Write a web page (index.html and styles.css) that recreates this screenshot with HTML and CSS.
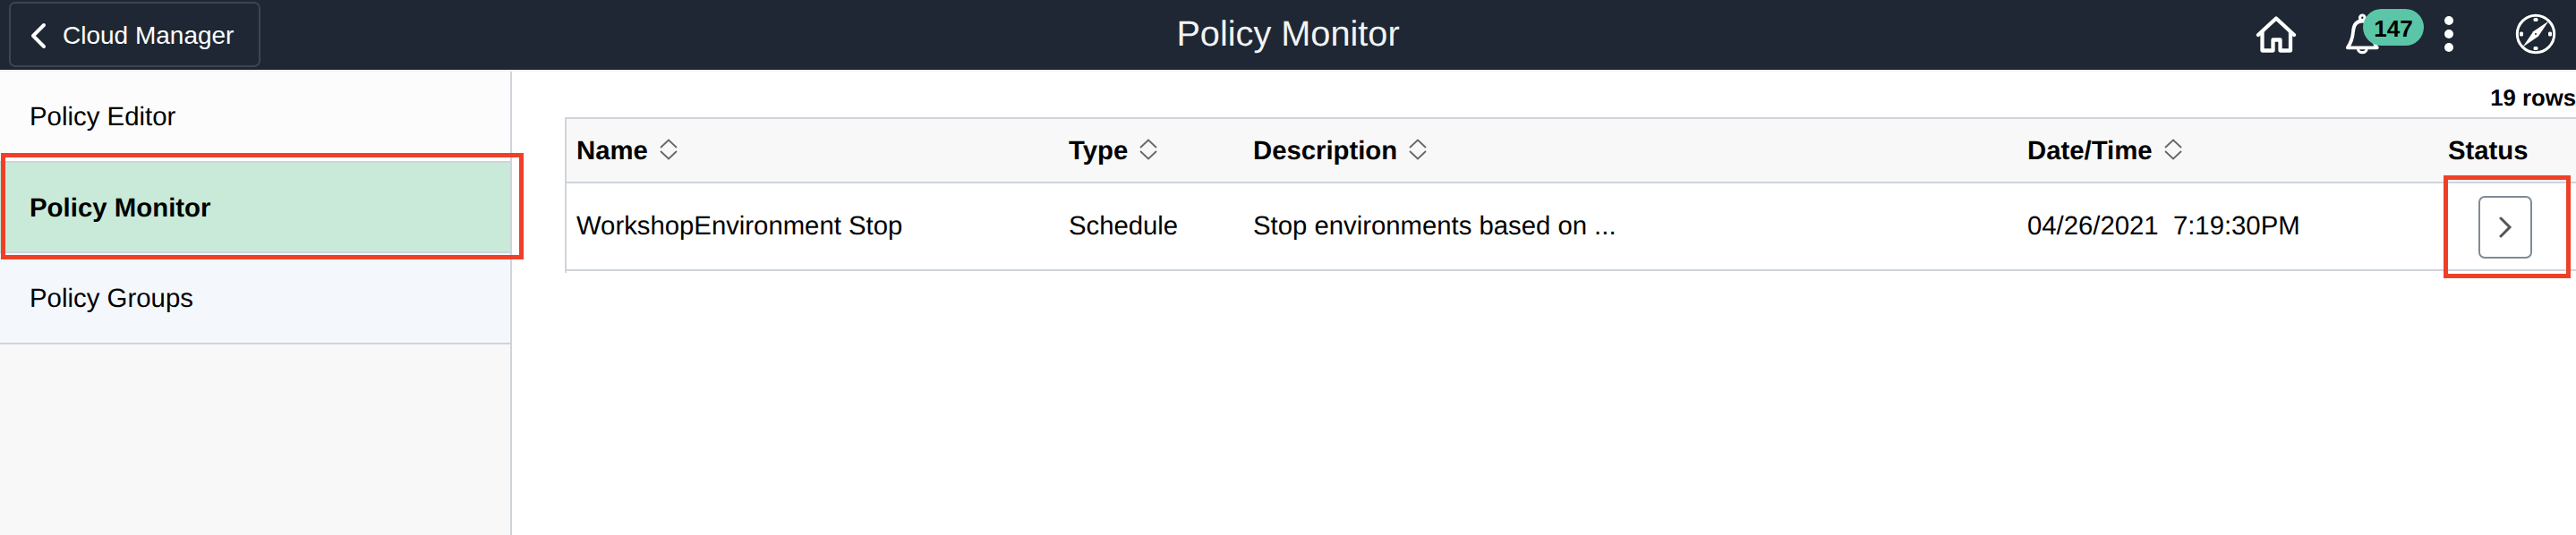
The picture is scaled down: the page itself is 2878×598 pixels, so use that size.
FILE: index.html
```html
<!DOCTYPE html>
<html lang="en">
<head>
<meta charset="utf-8">
<title>Policy Monitor</title>
<link rel="stylesheet" href="styles.css">
</head>
<body>
<div class="app">
  <header class="topbar">
    <div class="side-left">
      <button class="back" type="button">
        <svg width="18" height="30" viewBox="0 0 18 30"><path d="M15 3 3 15 15 27" fill="none" stroke="#fff" stroke-width="4" stroke-linecap="round" stroke-linejoin="round"/></svg>
        <span>Cloud Manager</span>
      </button>
    </div>
    <h1 class="title">Policy Monitor</h1>
    <nav class="actions">
      <svg class="home" width="46" height="44" viewBox="0 0 46 44" fill="none" stroke="#fff" stroke-width="4.300"><path d="M3 23 23 4.500 43 23" stroke-linecap="round" stroke-linejoin="round"/><path d="M7.500 19V40.500H19.500V28.500H27.500V40.500H39V19" stroke-linejoin="round"/></svg>
      <div class="bell">
        <svg width="40" height="46" viewBox="0 0 40 46" fill="none" stroke="#fff" stroke-width="3.800" stroke-linejoin="round"><circle cx="20.300" cy="4.800" r="2.800" stroke-width="3.200"/><path d="M3.800 38.300C8.500 31.500 9.500 27 10 20.500 10.500 12 14 8.500 20.300 8.500S30 12 30.500 20.500C31 27 32 31.500 36.800 38.300Z"/><path d="M15.500 39.500a4.800 4.200 0 0 0 9.600 0" stroke-width="3.200"/></svg>
        <span class="badge">147</span>
      </div>
      <svg class="dots" width="10" height="40" viewBox="0 0 10 40" fill="#fff"><circle cx="5" cy="5" r="5"/><circle cx="5" cy="20" r="5"/><circle cx="5" cy="35" r="5"/></svg>
      <svg class="compass" width="46" height="46" viewBox="0 0 46 46"><circle cx="23" cy="23" r="20.700" fill="none" stroke="#fff" stroke-width="3"/><path d="M37.500 8.500 25.800 25.800 8.500 37.500 20.200 20.200Z" fill="#fff"/><circle cx="23" cy="23" r="1" fill="#1e2733"/><g fill="#fff"><rect x="20.500" y="5" width="5" height="4" rx="1.500"/><rect x="20.500" y="37" width="5" height="4" rx="1.500"/><rect x="5" y="20.500" width="4" height="5" rx="1.500"/><rect x="37" y="20.500" width="4" height="5" rx="1.500"/></g></svg>
    </nav>
  </header>
  <div class="body">
    <aside class="sidebar">
      <a class="item">Policy Editor</a>
      <a class="item selected">Policy Monitor</a>
      <a class="item last">Policy Groups</a>
    </aside>
    <main class="content">
      <div class="count">19 rows</div>
      <div class="table">
        <div class="row head">
          <div>Name<svg class="sort" viewBox="0 0 20 24"><path d="M1 10 10 1.500 19 10M1 14 10 22.500 19 14"/></svg></div>
          <div>Type<svg class="sort" viewBox="0 0 20 24"><path d="M1 10 10 1.500 19 10M1 14 10 22.500 19 14"/></svg></div>
          <div>Description<svg class="sort" viewBox="0 0 20 24"><path d="M1 10 10 1.500 19 10M1 14 10 22.500 19 14"/></svg></div>
          <div>Date/Time<svg class="sort" viewBox="0 0 20 24"><path d="M1 10 10 1.500 19 10M1 14 10 22.500 19 14"/></svg></div>
          <div>Status</div>
        </div>
        <div class="row data">
          <div>WorkshopEnvironment Stop</div>
          <div>Schedule</div>
          <div>Stop environments based on ...</div>
          <div>04/26/2021&nbsp; 7:19:30PM</div>
          <div><button class="go" type="button" aria-label="Status"><svg width="16" height="24" viewBox="0 0 16 24"><path d="M3 2 13 12 3 22" fill="none" stroke="#555" stroke-width="3" stroke-linecap="round"/></svg></button></div>
        </div>
      </div>
    </main>
  </div>
  <div class="mark mark-nav"></div>
  <div class="mark mark-status"></div>
</div>
</body>
</html>
```
FILE: styles.css
```css
* { box-sizing: border-box; }
body {
  margin: 0;
  font-family: "Liberation Sans", Arial, sans-serif;
  color: #000;
  background: #fff;
  text-rendering: geometricPrecision;
}
svg { display: block; flex: none; }
.app {
  position: relative;
  width: 2878px;
  height: 598px;
  overflow: hidden;
  display: flex;
  flex-direction: column;
}
.topbar {
  flex: none;
  height: 80px;
  display: grid;
  grid-template-columns: 1fr auto 1fr;
  background: #1e2733;
  border-bottom: 2px solid #f3f0ef;
}
.side-left { padding: 2px 0 0 10px; }
.back {
  display: flex;
  align-items: center;
  gap: 18px;
  width: 281px;
  height: 73px;
  padding: 2px 0 0 22px;
  border: 2px solid #3d454f;
  border-radius: 7px;
  background: none;
  color: #fff;
  font: 28px "Liberation Sans", Arial, sans-serif;
}
.title {
  margin: 0;
  font-size: 39.700px;
  font-weight: 400;
  line-height: 77px;
  color: #f2f3f3;
}
.actions {
  display: flex;
  justify-content: flex-end;
  align-items: flex-start;
  padding-right: 22px;
}
.home { margin-top: 16px; }
.bell { position: relative; margin: 15px 0 0 53px; }
.badge {
  position: absolute;
  left: 21px;
  top: -5px;
  width: 68px;
  height: 41px;
  border-radius: 21px;
  background: #5bc5a7;
  color: #000;
  font-size: 26px;
  font-weight: 700;
  line-height: 44px;
  text-align: center;
}
.dots { margin: 18px 0 0 72px; }
.compass { margin: 15px 0 0 69px; }
.body { flex: 1; display: flex; }
.sidebar {
  flex: none;
  width: 572px;
  background: #f8f8f8;
  border-right: 2px solid #cfd4da;
}
.item {
  display: block;
  height: 102px;
  padding-left: 33px;
  border-bottom: 2px solid #cfd4da;
  background: #fcfcfc;
  font-size: 29.400px;
  line-height: 101px;
}
.selected { height: 101px; background: #c9ead8; font-weight: 700; }
.last { background: #f4f7fc; }
.content { flex: 1; min-width: 0; padding-left: 59px; }
.count {
  height: 51px;
  font-size: 25.700px;
  font-weight: 700;
  line-height: 61px;
  text-align: right;
  white-space: nowrap;
}
.table {
  height: 174px;
  border-top: 2px solid #cfd4da;
  border-left: 2px solid #cfd4da;
}
.row {
  display: grid;
  grid-template-columns: 550px 206px 865px 470px 1fr;
  padding-left: 11px;
  border-bottom: 2px solid #cfd4da;
  font-size: 29.300px;
  white-space: pre;
}
.row > div { display: flex; align-items: center; }
.head { height: 72px; padding-top: 2px; background: #f8f8f8; font-weight: 700; }
.data { height: 98px; }
.sort {
  width: 20px;
  height: 24px;
  margin: -5px 0 0 13px;
  fill: none;
  stroke: #666;
  stroke-width: 1.800;
}
.go {
  display: flex;
  align-items: center;
  justify-content: center;
  width: 60px;
  height: 70px;
  margin: 2px 0 0 34px;
  padding: 0;
  border: 2px solid #7f8b96;
  border-radius: 7px;
  background: #fff;
}
.mark { position: absolute; border: 5px solid #ee4028; }
.mark-nav { left: 1px; top: 171px; width: 584px; height: 119px; }
.mark-status { left: 2730px; top: 196px; width: 142px; height: 115px; }
```
